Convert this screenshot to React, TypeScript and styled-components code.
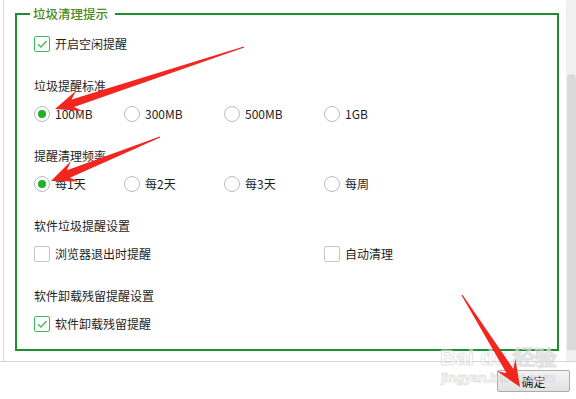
import styled, { createGlobalStyle } from 'styled-components';

const GlobalStyle = createGlobalStyle`
  html, body {
    margin: 0;
    padding: 0;
    background: #ffffff;
  }
  body {
    font-family: "Noto Sans CJK SC", "Microsoft YaHei", sans-serif;
    font-size: 12px;
    color: #1e1e1e;
  }
`;

const Page = styled.div`
  position: relative;
  width: 576px;
  height: 399px;
  overflow: hidden;
  background: #ffffff;
`;

const Main = styled.div`
  display: flex;
  height: 362px;
  box-sizing: border-box;
  border-bottom: 1px solid #d6d6d6;
`;

const Gutter = styled.div`
  width: 3px;
  border-right: 1px solid #dcdcdc;
`;

const Content = styled.div`
  flex: 1;
  padding: 13px 7px 0 11px;
`;

const Group = styled.div`
  position: relative;
  box-sizing: border-box;
  height: 338px;
  border: 2px solid #1e8f2e;
  padding: 21px 0 0 17px;
  display: flex;
  flex-direction: column;
  gap: 26px;
`;

const Legend = styled.div`
  position: absolute;
  top: -10px;
  left: 13px;
  padding: 0 7px 0 3px;
  line-height: 18px;
  background: #ffffff;
  color: #4e8a1c;
  font-size: 12.5px;
  font-weight: 500;
`;

const Section = styled.div`
  display: flex;
  flex-direction: column;
  gap: 12px;
`;

const SectionTitle = styled.div`
  line-height: 16px;
  height: 16px;
`;

const OptionRow = styled.div<{ $cols: string }>`
  display: grid;
  grid-template-columns: ${(p) => p.$cols};
  height: 16px;
`;

const Option = styled.label`
  display: flex;
  align-items: center;
  gap: 5px;
  line-height: 16px;
  white-space: nowrap;
`;

const RadioDot = styled.span<{ $on?: boolean }>`
  position: relative;
  display: inline-block;
  box-sizing: border-box;
  width: 16px;
  height: 16px;
  border: 1px solid #bdbdbd;
  border-radius: 50%;
  background: #ffffff;
  &::after {
    content: '';
    display: ${(p) => (p.$on ? 'block' : 'none')};
    position: absolute;
    left: 3px;
    top: 3px;
    width: 8px;
    height: 8px;
    border-radius: 50%;
    background: #20b02a;
  }
`;

const CheckBox = styled.span<{ $on?: boolean }>`
  display: inline-flex;
  align-items: center;
  justify-content: center;
  box-sizing: border-box;
  width: 16px;
  height: 16px;
  border: 1px solid ${(p) => (p.$on ? '#3dbb5a' : '#c6c6c6')};
  border-radius: 2px;
  background: #ffffff;
`;

const Scrollbar = styled.div`
  width: 10px;
  background: #f0f0f0;
  display: flex;
  flex-direction: column;
`;

const Thumb = styled.div`
  margin-top: 74px;
  height: 276px;
  margin-left: 1px;
  border-radius: 5px 5px 0 0;
  background: #dadada;
`;

const Footer = styled.div`
  display: flex;
  justify-content: flex-end;
  padding: 8px 6px 0 0;
`;

const Button = styled.button`
  width: 73px;
  height: 22px;
  padding: 0;
  border: 1px solid #acacac;
  border-radius: 2px;
  background: linear-gradient(#f3f3f3, #e2e2e2);
  font-family: "Noto Sans CJK SC", "Microsoft YaHei", sans-serif;
  font-size: 12px;
  color: #111111;
`;

const Watermark = styled.div`
  position: absolute;
  left: 440px;
  top: 346px;
  white-space: nowrap;
  color: rgba(255, 255, 255, 0.5);
  -webkit-text-stroke: 1px rgba(200, 200, 200, 0.5);
  font-family: "Liberation Sans", Arial, sans-serif;
  font-weight: bold;
  pointer-events: none;
`;

const WatermarkBig = styled.div`
  font-size: 22px;
  line-height: 24px;
`;

const WatermarkSmall = styled.div`
  font-size: 13px;
  line-height: 16px;
  padding-left: 1px;
`;

const Overlay = styled.svg`
  position: absolute;
  left: 0;
  top: 0;
  pointer-events: none;
`;

function Radio({ on, label }: { on?: boolean; label: string }) {
  return (
    <Option>
      <RadioDot $on={on} />
      {label}
    </Option>
  );
}

function Check({ on, label }: { on?: boolean; label: string }) {
  return (
    <Option>
      <CheckBox $on={on}>
        {on && (
          <svg width="12" height="12" viewBox="0 0 12 12">
            <polyline points="2,6.2 5,9 10.5,3" fill="none" stroke="#3dbb5a" strokeWidth="1.3" />
          </svg>
        )}
      </CheckBox>
      {label}
    </Option>
  );
}

// red annotation arrow, tail -> tip
function arrowPoints(tx: number, ty: number, px: number, py: number, head = 26, wing = 11, shaft = 4) {
  const dx = px - tx;
  const dy = py - ty;
  const len = Math.hypot(dx, dy);
  const ux = dx / len;
  const uy = dy / len;
  const nx = -uy;
  const ny = ux;
  const bx = px - ux * head;
  const by = py - uy * head;
  const cx = px - ux * head * 0.72;
  const cy = py - uy * head * 0.72;
  const pts = [
    [tx + nx * 0.6, ty + ny * 0.6],
    [cx + nx * shaft, cy + ny * shaft],
    [bx + nx * wing, by + ny * wing],
    [px, py],
    [bx - nx * wing, by - ny * wing],
    [cx - nx * shaft, cy - ny * shaft],
    [tx - nx * 0.6, ty - ny * 0.6],
  ];
  return pts.map((p) => p.map((v) => v.toFixed(1)).join(',')).join(' ');
}

const arrows = [
  [244, 47, 55, 109],
  [160, 137, 51, 181],
  [462, 295, 520, 387],
];

const FOUR = '90px 100px 100px auto';

export default function App() {
  return (
    <Page>
      <GlobalStyle />
      <Main>
        <Gutter />
        <Content>
          <Group>
            <Legend>垃圾清理提示</Legend>
            <Section>
              <OptionRow $cols="auto">
                <Check on label="开启空闲提醒" />
              </OptionRow>
            </Section>
            <Section>
              <SectionTitle>垃圾提醒标准</SectionTitle>
              <OptionRow $cols={FOUR}>
                <Radio on label="100MB" />
                <Radio label="300MB" />
                <Radio label="500MB" />
                <Radio label="1GB" />
              </OptionRow>
            </Section>
            <Section>
              <SectionTitle>提醒清理频率</SectionTitle>
              <OptionRow $cols={FOUR}>
                <Radio on label="每1天" />
                <Radio label="每2天" />
                <Radio label="每3天" />
                <Radio label="每周" />
              </OptionRow>
            </Section>
            <Section>
              <SectionTitle>软件垃圾提醒设置</SectionTitle>
              <OptionRow $cols="290px auto">
                <Check label="浏览器退出时提醒" />
                <Check label="自动清理" />
              </OptionRow>
            </Section>
            <Section>
              <SectionTitle>软件卸载残留提醒设置</SectionTitle>
              <OptionRow $cols="auto">
                <Check on label="软件卸载残留提醒" />
              </OptionRow>
            </Section>
          </Group>
        </Content>
        <Scrollbar>
          <Thumb />
        </Scrollbar>
      </Main>
      <Footer>
        <Button>确定</Button>
      </Footer>
      <Watermark>
        <WatermarkBig>Bai du 经验</WatermarkBig>
        <WatermarkSmall>jingyan.baidu.com</WatermarkSmall>
      </Watermark>
      <Overlay width="576" height="399" viewBox="0 0 576 399">
        {arrows.map(([a, b, c, d], i) => (
          <polygon key={i} points={arrowPoints(a, b, c, d)} fill="#f2261f" />
        ))}
      </Overlay>
    </Page>
  );
}
